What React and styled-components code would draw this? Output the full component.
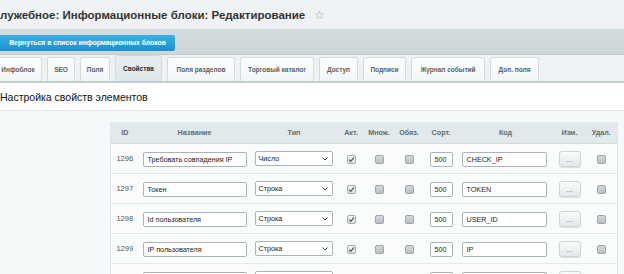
import React from 'react'
import styled, { createGlobalStyle } from 'styled-components'

const GlobalStyle = createGlobalStyle`
  html, body {
    margin: 0;
    padding: 0;
    background: #f5f9fa;
    font-family: "Liberation Sans", Arial, sans-serif;
    overflow: hidden;
  }
`

const tabs = [
  { label: 'Инфоблок', w: 48, first: true },
  { label: 'SEO', w: 28 },
  { label: 'Поля', w: 30 },
  { label: 'Свойства', w: 47, active: true },
  { label: 'Поля разделов', w: 68 },
  { label: 'Торговый каталог', w: 74 },
  { label: 'Доступ', w: 39 },
  { label: 'Подписи', w: 43 },
  { label: 'Журнал событий', w: 74 },
  { label: 'Доп. поля', w: 49 },
]

const columns = [
  { title: 'ID', w: 28 },
  { title: 'Название', w: 112 },
  { title: 'Тип', w: 87 },
  { title: 'Акт.', w: 27 },
  { title: 'Множ.', w: 29 },
  { title: 'Обяз.', w: 31 },
  { title: 'Сорт.', w: 33 },
  { title: 'Код', w: 96 },
  { title: 'Изм.', w: 32 },
  { title: 'Удал.', w: 32 },
]

// последняя строка видна только краем, текст в ней не попадает в кадр
const rows = [
  { id: 1296, name: 'Требовать совпадения IP', type: 'Число', sort: '500', code: 'CHECK_IP' },
  { id: 1297, name: 'Токен', type: 'Строка', sort: '500', code: 'TOKEN' },
  { id: 1298, name: 'Id пользователя', type: 'Строка', sort: '500', code: 'USER_ID' },
  { id: 1299, name: 'IP пользователя', type: 'Строка', sort: '500', code: 'IP' },
  { id: '', name: '', type: '', sort: '', code: '', partial: true },
]

function Checkbox({ checked }) {
  return (
    <Box checked={checked}>
      {checked && (
        <svg width="7" height="7" viewBox="0 0 7 7">
          <path d="M1 3.6 L2.8 5.3 L6 1.3" fill="none" stroke="#555" strokeWidth="1.2" />
        </svg>
      )}
    </Box>
  )
}

function App() {
  return (
    <Page>
      <GlobalStyle />
      <TitleBar>
        <Title>лужебное: Информационные блоки: Редактирование</Title>
        <Star>☆</Star>
      </TitleBar>
      <Toolbar>
        <BackButton>Вернуться в список информационных блоков</BackButton>
      </Toolbar>
      <TabBar>
        {tabs.map((t) => (
          <Tab key={t.label} active={t.active} first={t.first} style={{ width: t.w }}>
            {t.label}
          </Tab>
        ))}
      </TabBar>
      <Content>
        <Heading>Настройка свойств элементов</Heading>
        <Body>
          <Table>
            <colgroup>
              {columns.map((c) => (
                <col key={c.title} style={{ width: c.w }} />
              ))}
            </colgroup>
            <thead>
              <tr>
                {columns.map((c) => (
                  <Th key={c.title}>{c.title}</Th>
                ))}
              </tr>
            </thead>
            <tbody>
              {rows.map((r, i) => (
                <Tr key={i}>
                  <IdCell>{r.id}</IdCell>
                  <Td>
                    <TextInput width={104}>{r.name}</TextInput>
                  </Td>
                  <Td>
                    <Select>
                      <span>{r.type}</span>
                      <svg width="6" height="4" viewBox="0 0 6 4">
                        <path d="M0.5 0.5 L3 3 L5.5 0.5" fill="none" stroke="#444" strokeWidth="1" />
                      </svg>
                    </Select>
                  </Td>
                  <Td center><Checkbox checked /></Td>
                  <Td center><Checkbox /></Td>
                  <Td center><Checkbox /></Td>
                  <Td center>
                    <TextInput width={23}>{r.sort}</TextInput>
                  </Td>
                  <Td>
                    <TextInput width={85}>{r.code}</TextInput>
                  </Td>
                  <Td center>
                    <EditButton>{r.partial ? '' : '...'}</EditButton>
                  </Td>
                  <Td center><Checkbox /></Td>
                </Tr>
              ))}
            </tbody>
          </Table>
        </Body>
      </Content>
    </Page>
  )
}

export default App

const Page = styled.div`
  width: 624px;
  height: 274px;
  overflow: hidden;
  background: #f5f9fa;
`

const TitleBar = styled.div`
  height: 29px;
  display: flex;
  align-items: center;
  background: #f0f3f5;
`

const Title = styled.h1`
  margin: 0;
  font-size: 11.5px;
  font-weight: bold;
  color: #333;
  white-space: nowrap;
`

const Star = styled.span`
  margin-left: 9px;
  font-size: 12px;
  color: #9aa2a6;
`

const Toolbar = styled.div`
  height: 25px;
  display: flex;
  align-items: center;
  background: linear-gradient(#d3dcdf, #cdd6d9);
  border-bottom: 1px solid #c2cbce;
`

const BackButton = styled.div`
  width: 175px;
  height: 16px;
  margin-top: 2px;
  display: flex;
  align-items: center;
  justify-content: center;
  background: linear-gradient(#3bb0e6, #1b8fce);
  border-radius: 0 2px 2px 0;
  color: #fff;
  font-size: 6.8px;
  font-weight: bold;
  white-space: nowrap;
`

const TabBar = styled.div`
  height: 28px;
  display: flex;
  align-items: flex-end;
  gap: 5px;
  background: #eef2f4;
  border-bottom: 2px solid #c4ccd0;
  box-sizing: border-box;
`

const Tab = styled.div`
  height: ${(p) => (p.active ? 26 : 24)}px;
  margin-left: ${(p) => (p.first ? '-6px' : '0')};
  box-sizing: border-box;
  display: flex;
  align-items: center;
  justify-content: center;
  background: ${(p) => (p.active ? 'linear-gradient(#e8eef0, #dfe6e9)' : 'linear-gradient(#ffffff, #f2f5f6)')};
  border: 1px solid #d3dadd;
  border-bottom: none;
  border-radius: 3px 3px 0 0;
  font-size: 6.5px;
  font-weight: bold;
  color: ${(p) => (p.active ? '#2c2c2c' : '#5a5f62')};
  white-space: nowrap;
`

const Content = styled.div`
  display: flex;
  flex-direction: column;
`

const Heading = styled.div`
  height: 27px;
  display: flex;
  align-items: center;
  background: #fff;
  border-bottom: 1px solid #e1e7e9;
  font-size: 10.5px;
  color: #111;
  white-space: nowrap;
`

const Body = styled.div`
  padding: 11px 7px 0 110px;
  background: #f5f9fa;
`

const Table = styled.table`
  width: 507px;
  border-collapse: collapse;
  table-layout: fixed;
  background: #fafcfc;
  border-left: 1px solid #dfe5e7;
  border-right: 1px solid #dfe5e7;
`

const Th = styled.th`
  height: 21px;
  padding: 0;
  background: #e2e9eb;
  border-bottom: 1px solid #d3dbde;
  font-size: 7.2px;
  font-weight: bold;
  color: #646c70;
  text-align: center;
  white-space: nowrap;
`

const Tr = styled.tr`
  height: 30px;
  border-bottom: 1px solid #e3e9eb;
`

const Td = styled.td`
  padding: 0 0 0 ${(p) => (p.center ? 0 : 4)}px;
  text-align: ${(p) => (p.center ? 'center' : 'left')};
  vertical-align: middle;
`

const IdCell = styled.td`
  padding: 0;
  text-align: center;
  font-size: 7.5px;
  color: #555;
`

const TextInput = styled.div`
  width: ${(p) => p.width}px;
  height: 15px;
  box-sizing: border-box;
  display: inline-flex;
  align-items: center;
  padding-left: 4px;
  background: #fff;
  border: 1px solid #a9b4b8;
  border-radius: 2px;
  font-size: 7.2px;
  color: #222;
  white-space: nowrap;
  overflow: hidden;
  vertical-align: middle;
`

const Select = styled.div`
  width: 78px;
  height: 15px;
  box-sizing: border-box;
  display: flex;
  align-items: center;
  justify-content: space-between;
  padding: 0 4px 0 3px;
  background: #fff;
  border: 1px solid #a9b4b8;
  border-radius: 2px;
  font-size: 7.2px;
  color: #222;
`

const Box = styled.span`
  width: 9px;
  height: 9px;
  box-sizing: border-box;
  display: inline-flex;
  align-items: center;
  justify-content: center;
  vertical-align: middle;
  border-radius: 2px;
  border: 1px solid ${(p) => (p.checked ? '#a3acb0' : '#9ca5a9')};
  background: ${(p) => (p.checked ? 'linear-gradient(#f4f6f7, #dde2e4)' : 'linear-gradient(#d4d9db, #b9c0c3)')};
`

const EditButton = styled.div`
  width: 22px;
  height: 16px;
  display: inline-flex;
  align-items: center;
  justify-content: center;
  box-sizing: border-box;
  background: linear-gradient(#fafbfb, #e2e8ea);
  border: 1px solid #cdd5d8;
  border-radius: 3px;
  box-shadow: 0 1px 1px rgba(0, 0, 0, 0.12);
  font-size: 7px;
  color: #666;
  vertical-align: middle;
`
